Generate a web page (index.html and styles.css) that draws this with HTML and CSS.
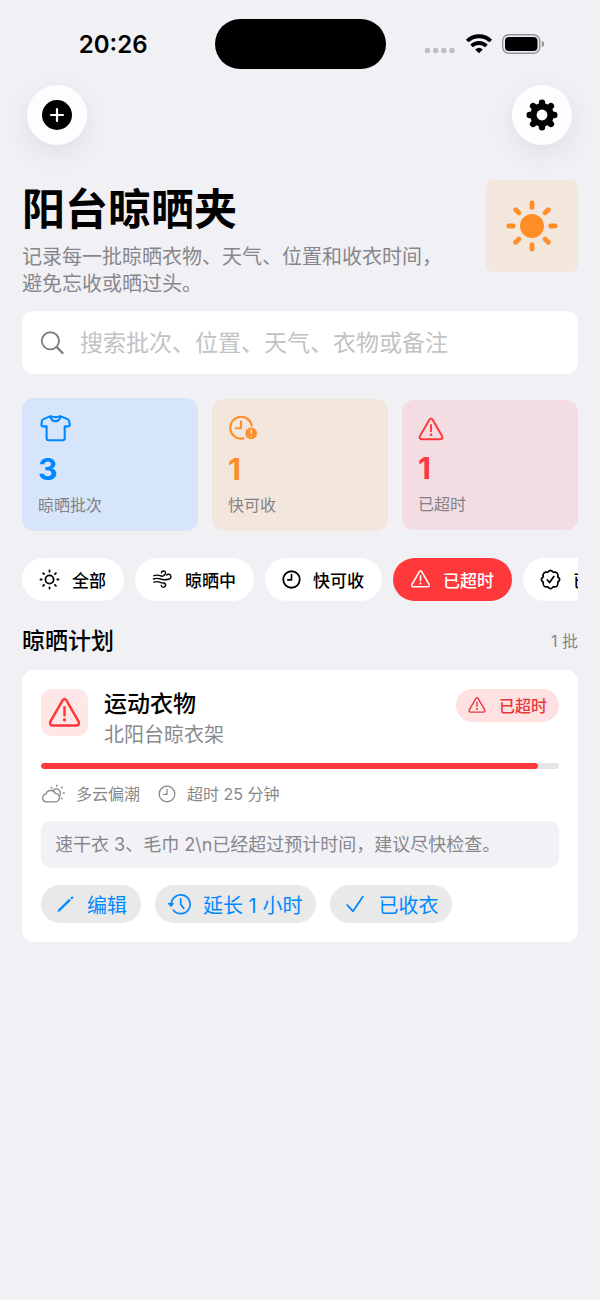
FILE: index.html
```html
<!DOCTYPE html>
<html lang="zh-CN">
<head>
<meta charset="utf-8">
<meta name="viewport" content="width=device-width, initial-scale=1">
<title>阳台晾晒夹</title>
<link rel="stylesheet" href="styles.css">
</head>
<body>
<svg class="sprite" aria-hidden="true">
  <symbol id="warning" viewBox="0 0 24 24">
    <path d="M10.6 3.2Q12 1.2 13.4 3.2L22.3 18.6Q23.3 21.2 20.6 21.4H3.4Q.7 21.2 1.7 18.6Z" fill="none" stroke="currentColor" stroke-width="1.8" stroke-linejoin="round"/>
    <path d="M12 8.2V14" stroke="currentColor" stroke-width="1.8" stroke-linecap="round"/>
    <circle cx="12" cy="17.3" r="1.2" fill="currentColor"/>
  </symbol>
  <symbol id="clock" viewBox="0 0 20 20">
    <circle cx="10" cy="10" r="8.7" fill="none" stroke="currentColor" stroke-width="var(--stroke, 1.9)"/>
    <path d="M10 4.8V10.4H6" fill="none" stroke="currentColor" stroke-width="var(--stroke, 1.7)" stroke-linecap="round" stroke-linejoin="round"/>
  </symbol>
</svg>

<header class="status-bar">
  <time class="status-time">20:26</time>
  <div class="island"></div>
  <div class="status-icons">
    <svg width="32" height="20" viewBox="0 0 32 20" fill="#bdbdc2" aria-hidden="true"><circle cx="3.5" cy="16.5" r="2.7"/><circle cx="11.7" cy="16.5" r="2.7"/><circle cx="19.8" cy="16.5" r="2.7"/><circle cx="28" cy="16.5" r="2.7"/></svg>
    <svg width="28" height="20" viewBox="0 0 28 20" aria-hidden="true"><g fill="none" stroke="#000" stroke-width="3.8"><path d="M2.2 7A17 17 0 0 1 25.8 7"/><path d="M6.6 12A10.6 10.6 0 0 1 21.4 12"/></g><path d="M10.2 15.4Q14 12.3 17.8 15.4L14 19.3Z"/></svg>
    <svg width="43" height="20" viewBox="0 0 43 20" aria-hidden="true"><rect x=".7" y=".7" width="37" height="18.6" rx="6" fill="none" stroke="#919196" stroke-width="1.4"/><rect x="3" y="3" width="32.5" height="14" rx="4"/><path d="M39.8 6.8Q42.2 7.8 42.2 10T39.8 13.2Z" fill="#919196"/></svg>
  </div>
</header>

<nav class="toolbar">
  <button class="round-button" type="button" aria-label="添加批次">
    <svg width="30" height="30" viewBox="0 0 30 30" aria-hidden="true"><circle cx="15" cy="15" r="15"/><path d="M15 9V21M9 15H21" stroke="#fff" stroke-width="2.2" stroke-linecap="round"/></svg>
  </button>
  <button class="round-button" type="button" aria-label="设置">
    <svg width="32" height="32" viewBox="-16 -16 32 32" aria-hidden="true">
      <g stroke="#000" stroke-width="6.4" stroke-linecap="round"><path d="M0-12.3V12.3M-12.3 0H12.3M-8.9-8.9 8.9 8.9M8.9-8.9-8.9 8.9"/></g>
      <circle r="11.8"/><circle r="5.4" fill="#fff"/>
    </svg>
  </button>
</nav>

<main class="page">
  <section class="hero">
    <div class="hero-text">
      <h1 class="hero-title">阳台晾晒夹</h1>
      <p class="hero-subtitle">记录每一批晾晒衣物、天气、位置和收衣时间，避免忘收或晒过头。</p>
    </div>
    <div class="hero-icon">
      <svg width="54" height="54" viewBox="-27 -27 54 54" fill="none" stroke="currentColor" stroke-width="4.8" stroke-linecap="round" aria-hidden="true"><circle r="12" fill="currentColor" stroke="none"/><path d="M0-23.2V-18.6M0 18.6V23.2M-23.2 0H-18.6M18.6 0H23.2M-16.3-16.3-13.1-13.1M13.1 13.1 16.3 16.3M-16.3 16.3-13.1 13.1M13.1-13.1 16.3-16.3"/></svg>
    </div>
  </section>

  <label class="search">
    <svg width="24" height="24" viewBox="0 0 24 24" fill="none" stroke="currentColor" stroke-linecap="round" aria-hidden="true"><circle cx="10.4" cy="9.8" r="8.6" stroke-width="1.9"/><path d="M16.8 16.2 22.5 22" stroke-width="2.4"/></svg>
    <input class="search-input" type="search" aria-label="搜索" placeholder="搜索批次、位置、天气、衣物或备注">
  </label>

  <section class="stats">
    <article class="stat stat-blue">
      <svg width="34" height="29" viewBox="0 0 34 29" fill="none" stroke="currentColor" stroke-width="2.1" stroke-linejoin="round" aria-hidden="true"><path d="M12.6 2.1 5.4 5.1Q4 5.7 3.8 7.5L3.4 11Q3.4 12.4 4.8 12.4H8.6V24.3Q8.6 26.2 10.5 26.2H24.8Q26.7 26.2 26.7 24.3V12.4H30.4Q31.8 12.4 31.8 11L31.2 7.5Q31 5.7 29.6 5.1L22.3 2.1Q20.5 3.1 17.5 3.1T12.6 2.1Z"/><path d="M12.3 2.6Q13.7 7.1 17.5 7.1T22.6 2.6"/></svg>
      <strong class="stat-value">3</strong>
      <span class="stat-label">晾晒批次</span>
    </article>
    <article class="stat stat-orange">
      <svg width="30" height="28" viewBox="0 0 30 28" fill="none" stroke="currentColor" stroke-width="2.1" stroke-linecap="round" stroke-linejoin="round" aria-hidden="true"><path d="M23.8 10.6A10.9 10.9 0 1 0 15.4 23.4M13 6.6V13.2H7.8"/><circle cx="23.2" cy="18.3" r="5.9" fill="currentColor" stroke="none"/><path d="M23.2 15V18.7M23.2 21.4V21.5" stroke="#f3e6dd" stroke-width="1.5"/></svg>
      <strong class="stat-value">1</strong>
      <span class="stat-label">快可收</span>
    </article>
    <article class="stat stat-red">
      <svg width="26" height="26" aria-hidden="true"><use href="#warning"/></svg>
      <strong class="stat-value">1</strong>
      <span class="stat-label">已超时</span>
    </article>
  </section>

  <div class="chips">
    <button class="chip" type="button">
      <svg width="21" height="21" viewBox="-10.5 -10.5 21 21" fill="none" stroke="currentColor" stroke-width="1.8" stroke-linecap="round" aria-hidden="true"><circle r="4.1"/><path d="M0-9V-7.8M0 7.8V9M-9 0H-7.8M7.8 0H9M-6.4-6.4-5.5-5.5M5.5 5.5 6.4 6.4M-6.4 6.4-5.5 5.5M5.5-5.5 6.4-6.4"/></svg>
      全部
    </button>
    <button class="chip" type="button">
      <svg width="21" height="21" viewBox="0 0 21 21" fill="none" stroke="currentColor" stroke-width="1.4" stroke-linecap="round" aria-hidden="true"><path d="M2 6.7Q5 5.5 8 6.7T12.4 6A2.1 2.1 0 1 0 9.4 3.8M1.5 10Q5 8.7 8.5 10T16.5 10.2A2.5 2.5 0 1 0 14.6 6M2 13.2Q5 12 7.7 13.2T11.7 14A2.2 2.2 0 1 1 9.2 16.5"/></svg>
      晾晒中
    </button>
    <button class="chip" type="button">
      <svg width="19" height="19" aria-hidden="true"><use href="#clock"/></svg>
      快可收
    </button>
    <button class="chip chip-active" type="button" aria-pressed="true">
      <svg width="21" height="20" aria-hidden="true"><use href="#warning"/></svg>
      已超时
    </button>
    <button class="chip" type="button">
      <svg width="21" height="21" viewBox="-10.5 -10.5 21 21" fill="none" stroke="currentColor" stroke-width="1.7" stroke-linecap="round" stroke-linejoin="round" aria-hidden="true"><path d="M0-9.2Q1.5-8.9 2.8-7.2 5-7.9 6.5-6.5 7.9-5 7.2-2.8 8.9-1.5 9.2 0 8.9 1.5 7.2 2.8 7.9 5 6.5 6.5 5 7.9 2.8 7.2 1.5 8.9 0 9.2-1.5 8.9-2.8 7.2-5 7.9-6.5 6.5-7.9 5-7.2 2.8-8.9 1.5-9.2 0-8.9-1.5-7.2-2.8-7.9-5-6.5-6.5-5-7.9-2.8-7.2-1.5-8.9 0-9.2Z"/><path d="M-3.2.5-.9 3 3.3-3"/></svg>
      已收衣
    </button>
  </div>

  <div class="section-head">
    <h2 class="section-title">晾晒计划</h2>
    <span class="section-count">1 批</span>
  </div>

  <article class="card">
    <div class="card-head">
      <div class="card-icon"><svg width="33" height="33" aria-hidden="true"><use href="#warning"/></svg></div>
      <div class="card-names">
        <h3 class="card-title">运动衣物</h3>
        <p class="card-place">北阳台晾衣架</p>
      </div>
      <span class="badge"><svg width="18" height="18" aria-hidden="true"><use href="#warning"/></svg>已超时</span>
    </div>
    <progress class="progress" value="96" max="100" aria-label="晾晒进度"></progress>
    <div class="meta">
      <span class="meta-item">
        <svg width="24" height="20" viewBox="0 0 24 20" fill="none" stroke="currentColor" stroke-width="1.3" stroke-linecap="round" aria-hidden="true"><path d="M5.2 17.8A3.9 3.9 0 0 1 4.8 10.1 5.1 5.1 0 0 1 14.3 9.4 4.2 4.2 0 1 1 14.2 17.8ZM12 6.4A4.2 4.2 0 1 1 18.4 12M15.7 1.2V2.3M10.2 3.2 11 4M21.2 3.2 20.4 4M22.2 9H23.3M20.5 14 21.2 14.7"/></svg>
        多云偏潮
      </span>
      <span class="meta-item">
        <svg class="thin" width="18" height="18" aria-hidden="true"><use href="#clock"/></svg>
        超时 25 分钟
      </span>
    </div>
    <p class="note">速干衣 3、毛巾 2\n已经超过预计时间，建议尽快检查。</p>
    <div class="actions">
      <button class="action" type="button">
        <svg width="20" height="20" viewBox="0 0 20 20" aria-hidden="true"><path d="M4.2 16.2 15 5.6" stroke="currentColor" stroke-width="2.3"/><path d="M2.4 18 3.3 14.9 5.4 17ZM15.3 3.9 16.5 2.7Q17.3 2.1 18 2.8T17.9 4.2L16.8 5.4Z" fill="currentColor"/></svg>
        编辑
      </button>
      <button class="action" type="button">
        <svg width="22" height="22" viewBox="0 0 22 22" fill="none" stroke="currentColor" stroke-width="1.7" stroke-linecap="round" stroke-linejoin="round" aria-hidden="true"><path d="M2.3 10.7A9.4 9.4 0 1 1 4.4 17.2M11.7 5.8V11.2L14.8 15.4"/><path d="M-.4 10.4H4.6L2.1 13.4Z" fill="currentColor" stroke-width="1"/></svg>
        延长 1 小时
      </button>
      <button class="action" type="button">
        <svg width="22" height="22" viewBox="0 0 22 22" fill="none" stroke="currentColor" stroke-width="1.8" stroke-linecap="round" stroke-linejoin="round" aria-hidden="true"><path d="M3.2 12 9 18.3 18.8 3.8"/></svg>
        已收衣
      </button>
    </div>
  </article>
</main>
</body>
</html>
```

FILE: styles.css
```css
:root {
  --bg: #f1f0f5;
  --ink: #000;
  --muted: #87878b;
  --blue: #0088ff;
  --orange: #ff8d28;
  --red: #ff383c;
}

* {
  box-sizing: border-box;
}

body {
  margin: 0;
  min-height: 100vh;
  background: var(--bg);
  color: var(--ink);
  font-family: Inter, "Noto Sans CJK SC", sans-serif;
  font-size: 16px;
}

h1, h2, h3, p {
  margin: 0;
}

button, input {
  font: inherit;
  color: inherit;
  border: 0;
}

button {
  cursor: pointer;
}

svg {
  display: block;
  flex: none;
  overflow: visible;
}

.sprite {
  width: 0;
  height: 0;
  position: absolute;
}

.status-bar {
  display: grid;
  grid-template-columns: 1fr 171px 1fr;
  align-items: center;
  padding: 19px 0 16px;
}

.status-time {
  justify-self: end;
  padding: 2px 67px 0 0;
  font-size: 24px;
  font-weight: 600;
  line-height: 30px;
}

.island {
  height: 50px;
  border-radius: 25px;
  background: #000;
}

.status-icons {
  display: flex;
  justify-self: end;
  gap: 9px;
  padding-right: 55px;
}

.toolbar {
  display: flex;
  justify-content: space-between;
  padding: 0 28px 35px 27px;
}

.round-button {
  display: grid;
  place-items: center;
  width: 60px;
  height: 60px;
  padding: 0;
  border-radius: 50%;
  background: #fdfdff;
  box-shadow: 0 8px 28px rgba(0, 0, 0, 0.08);
}

.page {
  padding: 0 22px 40px;
}

.hero {
  display: flex;
  align-items: flex-start;
  gap: 30px;
}

.hero-text {
  flex: 1;
}

.hero-title {
  font-size: 43px;
  font-weight: 700;
  line-height: 58px;
}

.hero-subtitle {
  margin-top: 6px;
  color: var(--muted);
  font-size: 20px;
  line-height: 27px;
}

.hero-icon {
  display: grid;
  place-items: center;
  width: 92px;
  height: 92px;
  border-radius: 8px;
  background: #f3e6dd;
  color: var(--orange);
}

.search {
  display: flex;
  align-items: center;
  gap: 16px;
  height: 63px;
  margin-top: 13px;
  padding: 0 18px;
  border-radius: 12px;
  background: #fff;
  color: #808084;
}

.search-input {
  flex: 1;
  min-width: 0;
  padding: 0;
  background: none;
  color: var(--ink);
  font-size: 23px;
  line-height: 32px;
  outline: 0;
}

.search-input::placeholder {
  color: #c2c2c5;
  opacity: 1;
}

.stats {
  display: grid;
  grid-template-columns: repeat(3, 1fr);
  align-items: center;
  gap: 14px;
  margin-top: 24px;
}

.stat {
  display: flex;
  flex-direction: column;
  gap: 8px;
  padding: 16px;
  border-radius: 12px;
}

.stat-blue {
  background: #d6e5f9;
  color: var(--blue);
}

.stat-orange {
  background: #f3e6dd;
  color: var(--orange);
}

.stat-red {
  background: #f4dce3;
  color: var(--red);
}

.stat-value {
  font-size: 30px;
  font-weight: 700;
  line-height: 36px;
}

.stat-label {
  color: #848085;
  font-size: 16px;
  line-height: 20px;
}

.chips {
  display: flex;
  gap: 11px;
  margin-top: 27px;
  overflow: hidden;
}

.chip {
  display: flex;
  flex: none;
  align-items: center;
  gap: 12px;
  height: 43px;
  padding: 0 18px 1px 17px;
  border-radius: 22px;
  background: #fff;
  font-size: 17px;
  font-weight: 500;
  white-space: nowrap;
}

.chip-active {
  background: var(--red);
  color: #fff;
}

.section-head {
  display: flex;
  align-items: center;
  justify-content: space-between;
  margin: 24px 0 13px;
}

.section-title {
  font-size: 23px;
  font-weight: 500;
  line-height: 32px;
}

.section-count {
  padding-bottom: 2px;
  color: var(--muted);
  font-size: 16px;
}

.card {
  padding: 19px;
  border-radius: 12px;
  background: #fff;
}

.card-head {
  display: flex;
  align-items: flex-start;
}

.card-icon {
  display: grid;
  place-items: center;
  width: 47px;
  height: 47px;
  border-radius: 10px;
  background: #ffe7e8;
  color: var(--red);
}

.card-names {
  flex: 1;
  padding-left: 16px;
}

.card-title {
  font-size: 23px;
  font-weight: 500;
  line-height: 31px;
}

.card-place {
  color: #8a8a8d;
  font-size: 20px;
  line-height: 31px;
}

.badge {
  display: flex;
  align-items: center;
  gap: 13px;
  height: 33px;
  padding: 0 12px 1px;
  border-radius: 17px;
  background: #ffe1e2;
  color: #e9363b;
  font-size: 16px;
  font-weight: 500;
}

.progress {
  display: block;
  width: 100%;
  height: 6px;
  margin: 12px 0 13px;
  border: 0;
  border-radius: 3px;
  overflow: hidden;
  appearance: none;
  background: #e5e5e6;
}

.progress::-webkit-progress-bar {
  background: #e5e5e6;
}

.progress::-webkit-progress-value {
  border-radius: 3px;
  background: var(--red);
}

.meta {
  display: flex;
  gap: 18px;
  color: var(--muted);
  font-size: 16px;
  line-height: 24px;
}

.meta-item {
  display: flex;
  align-items: center;
  gap: 11px;
}

.thin {
  --stroke: 1.4;
}

.note {
  margin: 15px 0 17px;
  padding: 10px 14px;
  border-radius: 10px;
  background: #f2f1f6;
  color: var(--muted);
  font-size: 18px;
  line-height: 27px;
}

.actions {
  display: flex;
  flex-wrap: wrap;
  gap: 14px;
}

.action {
  display: flex;
  align-items: center;
  gap: 12px;
  height: 38px;
  padding: 0 14px;
  border-radius: 19px;
  background: #e9e9ea;
  color: var(--blue);
  font-size: 20px;
  white-space: nowrap;
}
```
